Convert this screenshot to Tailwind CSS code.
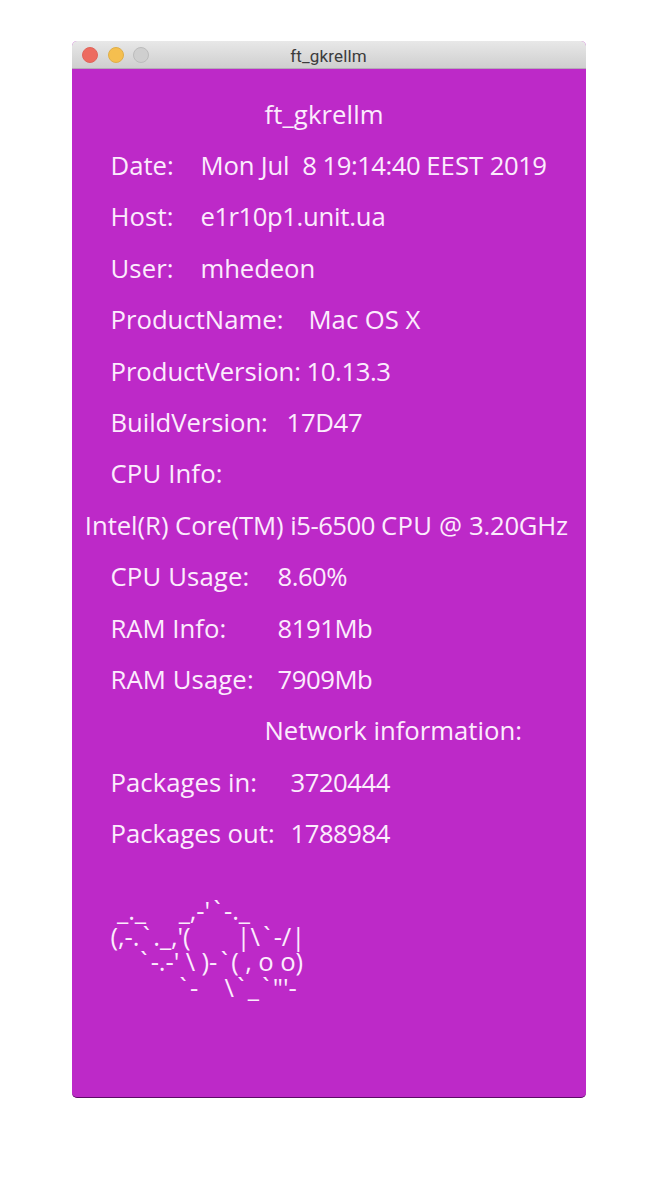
<!DOCTYPE html>
<html lang="en">
<head>
<meta charset="utf-8">
<title>ft_gkrellm</title>
<script src="https://cdn.jsdelivr.net/npm/@tailwindcss/browser@4"></script>
</head>
<body class="bg-white">
<main class="ml-[72px] mt-[41px] flex h-[1057px] w-[514px] flex-col overflow-hidden rounded-t-[5px] rounded-b-[5px] border-b border-[#5c0b66] bg-[#bd29c8]">
  <header class="grid h-7 shrink-0 grid-cols-[1fr_auto_1fr] items-center border-b border-[#b5a9b7] bg-gradient-to-b from-[#e8e8e8] to-[#cfcfcf]">
    <div class="flex gap-[9.7px] pl-[10px] pt-px">
      <span class="size-4 rounded-full border border-[#e0655b] bg-[#ed6b60]"></span>
      <span class="size-4 rounded-full border border-[#dfae49] bg-[#f5bf4f]"></span>
      <span class="size-4 rounded-full border border-[#bcbcbc] bg-[#cfcfcf]"></span>
    </div>
    <h1 class="pt-[3px] pr-px font-[Roboto,sans-serif] text-[17px] leading-6 tracking-[0.15px] text-[#3c3c3c]">ft_gkrellm</h1>
  </header>
  <section class="flex flex-col whitespace-pre pt-[19.5px] pl-[38.5px] font-['Open_Sans',sans-serif] text-[25.7px] leading-[51.4px] text-[#fcecfd]">
    <h2 class="pl-[154px] tracking-[0.1px]">ft_gkrellm</h2>
    <div class="flex"><span class="w-[90px]">Date:</span><span class="tracking-[-0.2px]">Mon Jul  </span><span class="tracking-[-0.5px]">8 19:14:40 </span><span>EEST </span><span class="tracking-[-0.5px]">2019</span></div>
    <div class="flex"><span class="w-[90px] tracking-[0.1px]">Host:</span><span class="tracking-[-0.5px]">e1r10p1</span><span class="tracking-[-0.2px]">.unit.ua</span></div>
    <div class="flex"><span class="w-[90px] tracking-[0.1px]">User:</span><span class="tracking-[-0.1px]">mhedeon</span></div>
    <div class="flex"><span class="w-[198px]">ProductName:</span><span>Mac OS X</span></div>
    <div class="flex"><span class="w-[196px] tracking-[-0.05px]">ProductVersion:</span><span class="tracking-[-0.4px]">10.13.3</span></div>
    <div class="flex"><span class="w-[176px] tracking-[-0.05px]">BuildVersion:</span><span class="tracking-[-0.3px]">17D47</span></div>
    <div class="tracking-[0.15px]">CPU Info:</div>
    <div class="-ml-[25.7px] flex"><span class="tracking-[-0.05px]">Intel(R) Core(TM) </span><span class="tracking-[-0.5px]">i5-6500 </span><span class="tracking-[0.2px]">CPU @ </span><span class="tracking-[-0.25px]">3.20GHz</span></div>
    <div class="flex"><span class="w-[167px] tracking-[0.15px]">CPU Usage:</span><span class="tracking-[-0.5px]">8.60%</span></div>
    <div class="flex"><span class="w-[167px]">RAM Info:</span><span class="tracking-[-0.45px]">8191Mb</span></div>
    <div class="flex"><span class="w-[167px] tracking-[0.1px]">RAM Usage:</span><span class="tracking-[-0.45px]">7909Mb</span></div>
    <h2 class="pl-[154px]">Network information:</h2>
    <div class="flex"><span class="w-[180px] tracking-[0.05px]">Packages in:</span><span class="tracking-[-0.5px]">3720444</span></div>
    <div class="flex"><span class="w-[180px]">Packages out:</span><span class="tracking-[-0.5px]">1788984</span></div>
    <div class="mt-[38.5px] flex flex-col leading-[25.7px] tracking-[-0.12px]">
      <div class="h-[25.7px]"> _._     _,-'<span class="inline-block w-[14px] text-center">`</span>-._</div>
      <div class="h-[25.7px]">(,-.<span class="inline-block w-[14px] text-center">`</span>._,'(       |\<span class="inline-block w-[14px] text-center">`</span>-/|</div>
      <div class="h-[25.7px]">    <span class="inline-block w-[14px] text-center">`</span>-.-' \ )-<span class="inline-block w-[14px] text-center">`</span>( , o o)</div>
      <div class="h-[25.7px]">          <span class="inline-block w-[14px] text-center">`</span>-    \<span class="inline-block w-[14px] text-center">`</span>_<span class="inline-block w-[14px] text-center">`</span>"'-</div>
    </div>
  </section>
</main>
</body>
</html>
